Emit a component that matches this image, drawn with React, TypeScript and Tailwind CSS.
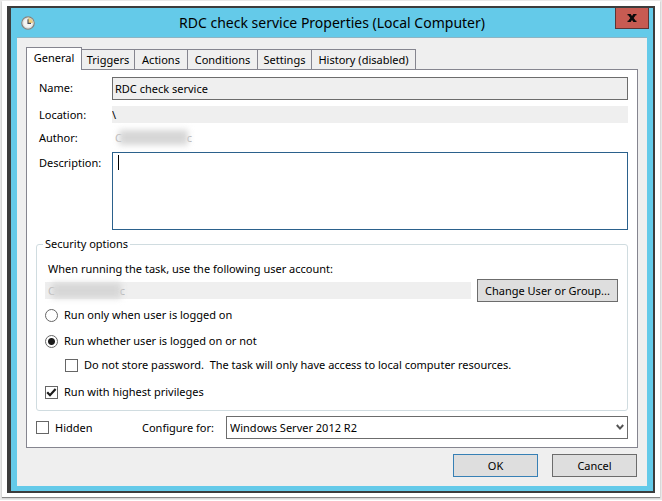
import React from 'react';

const TABS = [
  { label: 'Triggers', width: 'w-[53px]' },
  { label: 'Actions', width: 'w-[53px]' },
  { label: 'Conditions', width: 'w-[70px]' },
  { label: 'Settings', width: 'w-[54px]' },
  { label: 'History (disabled)', width: 'w-[104px]' },
];

const ClockIcon = () => (
  <svg viewBox="0 0 14 14" className="w-[14px] h-[14px] shrink-0" aria-hidden="true">
    <circle cx="7" cy="7" r="6.2" fill="#f4f4f2" stroke="#85817a" strokeWidth="1.2" />
    <path d="M7 7V1.6A5.4 5.4 0 0 1 12.4 7Z" fill="#f3cf7c" />
    <circle cx="7" cy="7" r="5" fill="none" stroke="#c3cbd0" strokeWidth="0.6" />
    <path d="M7 3.2V7.4H10" fill="none" stroke="#454b58" strokeWidth="1.1" />
  </svg>
);

const CloseIcon = () => (
  <svg viewBox="0 0 10 8" className="w-[10px] h-[8px]" aria-hidden="true">
    <path d="M0.5 0H3.6L5 2L6.4 0H9.5V1.3H8.7L6.7 4L8.7 6.7H9.5V8H6.4L5 6L3.6 8H0.5V6.7H1.3L3.3 4L1.3 1.3H0.5Z" fill="#0b0b0b" />
  </svg>
);

const Radio = ({ label, defaultChecked }: { label: string; defaultChecked?: boolean }) => (
  <label className="flex items-center gap-[6px] h-[26px]">
    <input
      type="radio"
      name="logon"
      defaultChecked={defaultChecked}
      className="appearance-none w-[13px] h-[13px] shrink-0 rounded-full border border-[#666] bg-white checked:bg-[radial-gradient(circle,#1c1c1c_3px,#fff_4px)]"
    />
    {label}
  </label>
);

const Checkbox = ({ label, defaultChecked }: { label: string; defaultChecked?: boolean }) => (
  <label className="flex items-center gap-[6px] whitespace-pre">
    <span className="relative flex shrink-0">
      <input
        type="checkbox"
        defaultChecked={defaultChecked}
        className="peer appearance-none w-[13px] h-[13px] border border-[#666] bg-white"
      />
      <svg viewBox="0 0 13 13" className="absolute inset-0 hidden peer-checked:block pointer-events-none" aria-hidden="true">
        <path d="M2.2 6.2L5 9.2L10.6 3" fill="none" stroke="#1c1c1c" strokeWidth="2.2" />
      </svg>
    </span>
    {label}
  </label>
);

// user names are smudged out
const Redacted = () => (
  <span className="relative flex items-center justify-between w-[77px] h-[17px] text-[#b5b5b5]">
    <span>C</span>
    <span>c</span>
    <span className="absolute inset-x-[4px] inset-y-[1px] bg-[#d6d6d6] blur-[3px]" />
  </span>
);

export default function App() {
  return (
    <div className="bg-[#e8e8e8] pt-px pl-[2px] pr-[2px] pb-[3px] font-['Noto_Sans','Open_Sans',sans-serif] text-[11px] leading-[16px] text-black">
      <div className="bg-white pt-[5px] pl-[5px] pr-[5px] pb-[4px] shadow-[0_1px_1px_0px_#888]">
        <div className="border-t-2 border-r-2 border-b-2 border-l-4 border-[#3c3c3c] bg-[#64cae9] px-[6px] pb-[5px]">
          <header className="grid grid-cols-[40px_1fr_40px] items-start h-[29px]">
            <div className="pt-[8px] pl-[4px]"><ClockIcon /></div>
            <h1 className="text-center text-[14px] leading-[29px] whitespace-nowrap">RDC check service Properties (Local Computer)</h1>
            <button
              aria-label="Close"
              className="justify-self-end -mr-[2px] w-[34px] h-[21px] flex items-center justify-center bg-[#c75b52] border border-t-0 border-[#5c3535]"
            >
              <CloseIcon />
            </button>
          </header>

          <main className="bg-[#efefef] border-t border-[#8cb5c4] px-[9px] pt-[9px] pb-[9px]">
            <div role="tablist" className="flex items-end">
              <button role="tab" aria-selected="true" className="relative w-[56px] h-[23px] -mb-px pb-[2px] bg-white border border-b-0 border-[#85858f]">
                General
              </button>
              {TABS.map((tab) => (
                <button
                  key={tab.label}
                  role="tab"
                  aria-selected="false"
                  className={`${tab.width} h-[20px] whitespace-nowrap border-t border-r border-[#85858f] flex items-center justify-center`}
                >
                  {tab.label}
                </button>
              ))}
            </div>

            <section role="tabpanel" className="bg-white border border-[#85858f] px-[9px] pt-[7px] pb-[8px]">
              <div className="grid grid-cols-[73px_1fr] pl-[3px]">
                <label htmlFor="name" className="pt-[3px]">Name:</label>
                <input id="name" readOnly defaultValue="RDC check service" className="w-full h-[23px] px-[2px] bg-[#efefef] border border-[#6c6c6c] outline-none" />
                <label htmlFor="location" className="mt-[7px]">Location:</label>
                <input id="location" readOnly defaultValue="\" className="w-full h-[17px] mt-[6px] bg-[#efefef] outline-none" />
                <span className="mt-[7px]">Author:</span>
                <div className="mt-[6px] pl-[3px]"><Redacted /></div>
                <label htmlFor="description" className="mt-[9px]">Description:</label>
                <div className="relative mt-[6px]">
                  <textarea id="description" className="block w-full h-[78px] px-[5px] resize-none border border-[#2b618c] bg-white outline-none" />
                  <span className="absolute left-[6px] top-[3px] w-px h-[15px] bg-black" />
                </div>
              </div>

              <fieldset className="mt-[6px] border border-[#d0dce0] rounded-[3px] px-[8px] pb-[10px]">
                <legend className="px-[2px] -ml-[2px]">Security options</legend>
                <p className="mt-[9px] pl-[3px]">When running the task, use the following user account:</p>
                <div className="flex items-center gap-[6px] mt-[2px] pr-px">
                  <div className="flex-1 h-[17px] pl-[3px] bg-[#efefef]"><Redacted /></div>
                  <button className="w-[141px] h-[23px] bg-[#dedede] border border-[#6c6c6c] whitespace-nowrap">Change User or Group...</button>
                </div>
                <Radio label="Run only when user is logged on" />
                <Radio label="Run whether user is logged on or not" defaultChecked />
                <div className="pl-[20px] mt-[3px]">
                  <Checkbox label="Do not store password.  The task will only have access to local computer resources." />
                </div>
                <div className="mt-[11px]">
                  <Checkbox label="Run with highest privileges" defaultChecked />
                </div>
              </fieldset>

              <div className="flex items-center mt-[5px]">
                <div className="w-[106px]"><Checkbox label="Hidden" /></div>
                <label htmlFor="configure" className="w-[84px] whitespace-nowrap">Configure for:</label>
                <div className="relative flex-1">
                  <select id="configure" className="appearance-none block w-full h-[23px] px-[3px] bg-white border border-[#6c6c6c]">
                    <option>Windows Server 2012 R2</option>
                  </select>
                  <svg viewBox="0 0 8 7" className="absolute right-[4px] top-[8px] w-[8px] h-[7px] pointer-events-none" aria-hidden="true">
                    <path d="M0.8 1L4 4.6L7.2 1" fill="none" stroke="#555" strokeWidth="2" />
                  </svg>
                </div>
              </div>
            </section>

            <div className="flex justify-end gap-[14px] mt-[6px] pr-px">
              <button className="w-[85px] h-[23px] bg-[#dedede] border border-[#3780b5]">OK</button>
              <button className="w-[85px] h-[23px] bg-[#dedede] border border-[#6c6c6c]">Cancel</button>
            </div>
          </main>
        </div>
      </div>
    </div>
  );
}
